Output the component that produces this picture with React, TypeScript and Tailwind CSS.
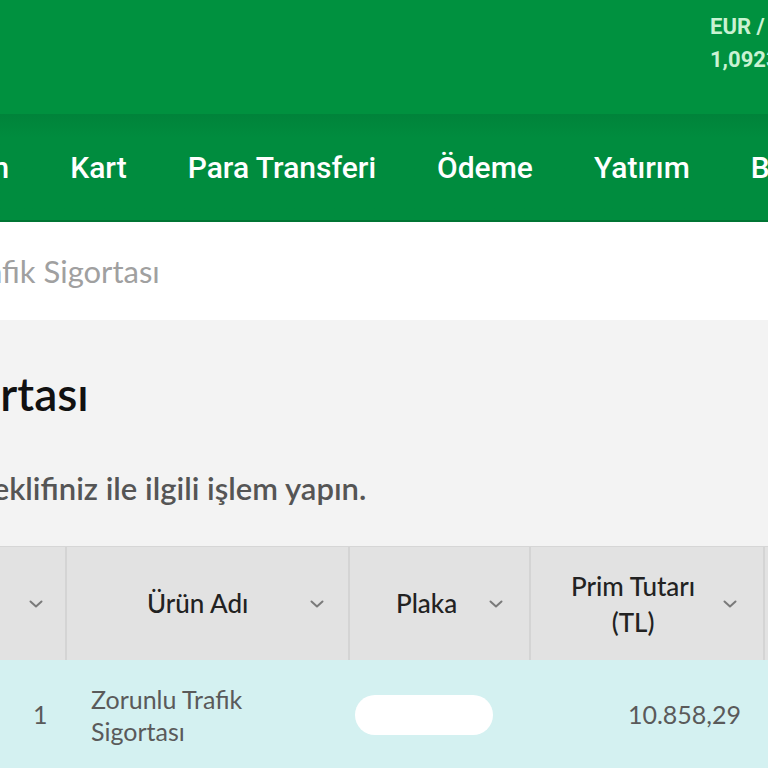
import React from 'react';

// Zoomed-in crop of a bank's insurance offer page
const navItems = ['Hesaplarım', 'Kart', 'Para Transferi', 'Ödeme', 'Yatırım', 'Başvuru'];

const Chevron: React.FC = () => (
  <svg width="18" height="12" viewBox="0 0 18 12" className="shrink-0">
    <path d="M3.5 3.5 L9 8.5 L14.5 3.5" fill="none" stroke="#7a7a7a" strokeWidth="2" strokeLinecap="round" strokeLinejoin="round" />
  </svg>
);

export default function App() {
  return (
    <div className="w-[768px] h-[768px] overflow-hidden bg-white" style={{ fontFamily: 'Lato, "Open Sans", sans-serif' }}>
      {/* Top bar */}
      <div className="h-[114px] bg-[#00913f] flex justify-end">
        <div className="w-[58px] pt-[10px] overflow-hidden whitespace-nowrap text-[#c9f2d2] font-bold text-[22px] leading-[33px]" style={{ fontFamily: 'Roboto, sans-serif' }}>
          <div>EUR / TL</div>
          <div>1,0923</div>
        </div>
      </div>

      {/* Main nav */}
      <div className="h-[108px] bg-gradient-to-b from-[#00833a] to-[#008c3e] to-[22%] border-b-2 border-[#007534] flex items-center whitespace-nowrap">
        <div className="flex items-center gap-[61px] ml-[-145px] text-white font-medium text-[30px]" style={{ fontFamily: 'Roboto, sans-serif' }}>
          {navItems.map((n) => (
            <span key={n}>{n}</span>
          ))}
        </div>
      </div>

      {/* Breadcrumb */}
      <div className="h-[98px] bg-white flex items-center whitespace-nowrap">
        <span className="ml-[-39px] text-[31px] text-[#a0a0a0] font-normal">Trafik Sigortası</span>
      </div>

      {/* Heading area */}
      <div className="h-[226px] bg-[#f3f3f3] whitespace-nowrap pt-[44px]">
        <div className="ml-[-379px] text-[46px] font-semibold text-[#111] leading-[60px]">Zorunlu Trafik Sigortası</div>
        <div className="ml-[-22px] mt-[46px] text-[31px] font-semibold text-[#555] leading-[36px]">Teklifiniz ile ilgili işlem yapın.</div>
      </div>

      {/* Table */}
      <div className="bg-[#f3f3f3]">
        <div className="flex h-[114px] bg-[#e2e2e2] border-t border-[#d6d6d6] text-[26px] text-[#222] font-medium">
          <div className="w-[67px] shrink-0 border-r-2 border-[#d4d4d4] flex items-center justify-end pr-[20px]">
            <Chevron />
          </div>
          <div className="w-[283px] shrink-0 border-r-2 border-[#d4d4d4] flex items-center pl-[80px] pr-[22px] justify-between">
            <span>Ürün Adı</span>
            <Chevron />
          </div>
          <div className="w-[181px] shrink-0 border-r-2 border-[#d4d4d4] flex items-center pl-[46px] pr-[24px] justify-between">
            <span>Plaka</span>
            <Chevron />
          </div>
          <div className="w-[234px] shrink-0 border-r-2 border-[#d4d4d4] flex items-center pl-[40px] pr-[24px] justify-between">
            <span className="text-center leading-[36px]">Prim Tutarı<br />(TL)</span>
            <Chevron />
          </div>
          <div className="flex-1" />
        </div>

        <div className="flex h-[110px] bg-[#d4f1f1] text-[25px] text-[#5a5a5a]">
          <div className="w-[67px] shrink-0 flex items-center pl-[33px]">1</div>
          <div className="w-[283px] shrink-0 flex flex-col justify-center pl-[24px] leading-[32px]">
            <span>Zorunlu Trafik</span>
            <span>Sigortası</span>
          </div>
          <div className="w-[181px] shrink-0 flex items-center pl-[5px]">
            <div className="w-[138px] h-[40px] rounded-full bg-white" />
          </div>
          <div className="w-[234px] shrink-0 flex items-center justify-end pr-[24px]">10.858,29</div>
          <div className="flex-1" />
        </div>
      </div>
    </div>
  );
}
